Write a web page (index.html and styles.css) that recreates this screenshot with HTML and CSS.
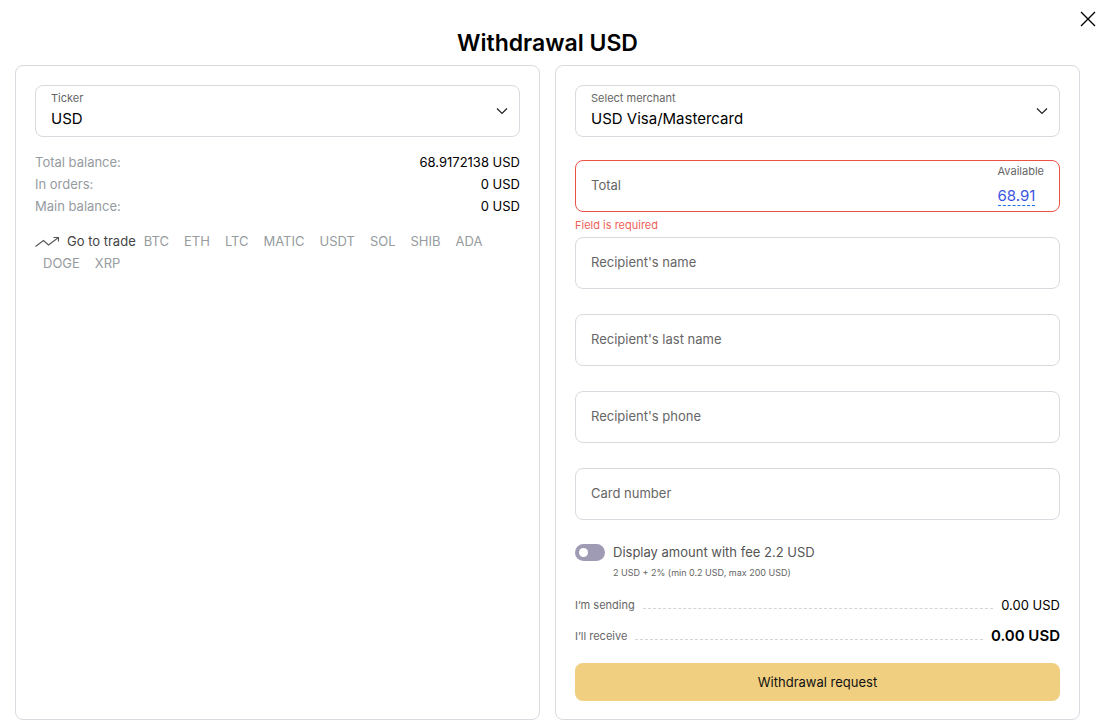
FILE: index.html
```html
<!DOCTYPE html>
<html lang="en">
<head>
  <meta charset="UTF-8">
  <meta name="viewport" content="width=device-width, initial-scale=1.0">
  <title>Withdrawal USD</title>
  <link rel="stylesheet" href="styles.css">
</head>
<body>

  <main class="modal">
    <button type="button" class="close" aria-label="Close">
      <svg width="16" height="16" viewBox="0 0 16 16" fill="none" stroke="#000" stroke-width="1.4"><path d="M1 1l14 14M15 1L1 15"/></svg>
    </button>
    <h1 class="title">Withdrawal USD</h1>

    <div class="columns">
      <section class="panel">
        <div class="field">
          <label class="caption" for="ticker">Ticker</label>
          <select id="ticker">
            <option>USD</option>
          </select>
          <svg class="arrow" width="12" height="8" viewBox="0 0 12 8" fill="none" stroke="#222" stroke-width="1.2"><path d="M1 1.500l5 5 5-5"/></svg>
        </div>

        <dl class="balances">
          <div class="balance"><dt>Total balance:</dt><dd>68.9172138 USD</dd></div>
          <div class="balance"><dt>In orders:</dt><dd>0 USD</dd></div>
          <div class="balance"><dt>Main balance:</dt><dd>0 USD</dd></div>
        </dl>

        <div class="trade">
          <svg class="trend" width="25" height="12" viewBox="0 0 25 12" fill="none" stroke="#555" stroke-width="1.1"><path d="M0.5 10.5L8.5 4.5L13.5 9L23.5 1.5M18.5 1.5H23.5V5.5"/></svg>
          <span class="trade-title">Go to trade</span>
          <a href="#">BTC</a>
          <a href="#">ETH</a>
          <a href="#">LTC</a>
          <a href="#">MATIC</a>
          <a href="#">USDT</a>
          <a href="#">SOL</a>
          <a href="#">SHIB</a>
          <a href="#">ADA</a>
          <a href="#">DOGE</a>
          <a href="#">XRP</a>
        </div>
      </section>

      <form class="panel">
        <div class="field merchant">
          <label class="caption" for="merchant">Select merchant</label>
          <select id="merchant">
            <option>USD Visa/Mastercard</option>
          </select>
          <svg class="arrow" width="12" height="8" viewBox="0 0 12 8" fill="none" stroke="#222" stroke-width="1.2"><path d="M1 1.5l5 5 5-5"/></svg>
        </div>

        <div class="field invalid">
          <label for="total">Total</label>
          <input type="text" id="total" aria-describedby="total-error">
          <div class="available">
            <span>Available</span>
            <a href="#">68.91</a>
          </div>
        </div>
        <p class="error" id="total-error">Field is required</p>

        <div class="field">
          <label for="name">Recipient's name</label>
          <input type="text" id="name">
        </div>
        <div class="field">
          <label for="lastname">Recipient's last name</label>
          <input type="text" id="lastname">
        </div>
        <div class="field">
          <label for="phone">Recipient's phone</label>
          <input type="tel" id="phone">
        </div>
        <div class="field last">
          <label for="card">Card number</label>
          <input type="text" id="card">
        </div>

        <div class="fee">
          <input type="checkbox" id="fee" class="switch">
          <label for="fee">Display amount with fee 2.2 USD</label>
          <small>2 USD + 2% (min 0.2 USD, max 200 USD)</small>
        </div>

        <div class="summary">
          <span>I’m sending</span>
          <i class="dots"></i>
          <span class="amount">0.00 USD</span>
        </div>
        <div class="summary">
          <span>I’ll receive</span>
          <i class="dots"></i>
          <strong class="amount">0.00 USD</strong>
        </div>

        <button type="submit" class="submit">Withdrawal request</button>
      </form>
    </div>
  </main>

</body>
</html>
```
FILE: styles.css
```css
* {
  box-sizing: border-box;
}
body {
  margin: 0;
  background-color: #fff;
  color: #000;
  font-family: Inter, "Liberation Sans", sans-serif;
  font-size: 13px;
  line-height: 22px;
}
p, dl, dd, h1 {
  margin: 0;
}
input, select, button {
  font-family: inherit;
  color: inherit;
}
a {
  color: inherit;
  text-decoration: none;
}
.modal {
  position: relative;
  padding: 28px 20px 6px 15px;
}
.close {
  position: absolute;
  top: 11px;
  right: 4px;
  padding: 0;
  border: none;
  background: none;
  line-height: 0;
  cursor: pointer;
}
.title {
  margin-bottom: 7px;
  font-size: 23px;
  font-weight: 600;
  line-height: 30px;
  text-align: center;
}
.columns {
  display: grid;
  grid-template-columns: 1fr 1fr;
  gap: 15px;
}
.panel {
  padding: 19px 19px 18px;
  border: 1px solid #d9dadf;
  border-radius: 8px;
}

/* label and control share one grid cell */
.field {
  display: grid;
  height: 52px;
  margin-bottom: 25px;
  border: 1px solid #d9dadf;
  border-radius: 8px;
  color: #666;
}
.field > * {
  grid-area: 1 / 1;
}
.field label {
  align-self: center;
  justify-self: start;
  padding: 0 0 2px 15px;
  pointer-events: none;
}
.field .caption {
  align-self: start;
  padding-top: 4px;
  font-size: 11px;
  line-height: 16px;
}
.field input, .field select {
  width: 100%;
  height: 100%;
  padding: 0 15px;
  border: none;
  border-radius: 8px;
  outline: none;
  background: none;
  color: #000;
  font-size: 15px;
}
.field select {
  appearance: none;
  padding: 14px 40px 0 15px;
  cursor: pointer;
}
.arrow {
  align-self: center;
  justify-self: end;
  margin-right: 11px;
  pointer-events: none;
}
.merchant {
  margin-bottom: 23px;
}
.invalid {
  margin-bottom: 0;
  border-color: #ed5145;
}
.last {
  margin-bottom: 21px;
}
.available {
  display: flex;
  flex-direction: column;
  align-items: flex-start;
  justify-self: end;
  padding: 2px 15px 0 0;
  font-size: 11px;
  line-height: 16px;
}
.available a {
  margin-top: 7px;
  border-bottom: 1px dashed #1a73e8;
  color: #3c55e0;
  font-size: 15px;
  line-height: 19px;
}
.error {
  padding: 5px 0 4px;
  color: #ed5f58;
  font-size: 11px;
  line-height: 16px;
}

.balances {
  margin-top: -11px;
}
.balance {
  display: flex;
  justify-content: space-between;
}
.balance dt {
  color: #969ba0;
}
.trade {
  display: flex;
  flex-wrap: wrap;
  margin-top: 13px;
  color: #969ba0;
}
.trend {
  margin: 6px 7px 0 0;
}
.trade-title {
  color: #444;
}
.trade a {
  padding: 0 7px 0 8px;
}

.fee {
  display: grid;
  grid-template-columns: 30px 1fr;
  column-gap: 8px;
  row-gap: 1px;
  align-items: center;
  margin-bottom: 12px;
  color: #555;
}
.fee small {
  grid-column: 2;
  font-size: 9px;
  line-height: 18px;
  color: #666;
}
.switch {
  appearance: none;
  width: 30px;
  height: 17px;
  margin: 0;
  padding: 4px;
  border-radius: 9px;
  background-color: #9f9bb5;
  cursor: pointer;
}
.switch::before {
  content: "";
  display: block;
  width: 9px;
  height: 9px;
  border-radius: 50%;
  background-color: #fff;
}
.switch:checked::before {
  margin-left: auto;
}
.summary {
  display: flex;
  align-items: center;
  gap: 8px;
  margin-bottom: 9px;
  color: #666;
  font-size: 11px;
}
.dots {
  flex: 1;
  margin-top: 6px;
  border-bottom: 1px dashed #d5d5d8;
}
.amount {
  color: #000;
  font-size: 13px;
}
strong.amount {
  font-size: 15px;
  font-weight: 600;
}
.submit {
  width: 100%;
  height: 38px;
  margin-top: 7px;
  border: none;
  border-radius: 8px;
  background-color: #f0cf80;
  color: #111;
  font-size: 13px;
  cursor: pointer;
}
```
